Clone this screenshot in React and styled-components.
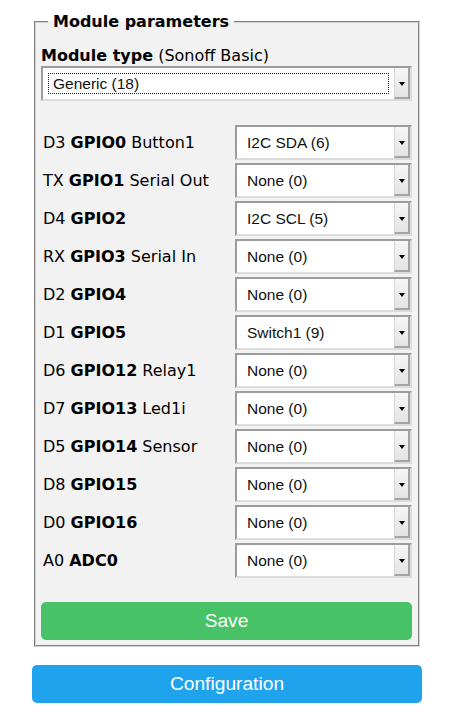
import React from "react";
import styled, { createGlobalStyle } from "styled-components";

const GlobalStyle = createGlobalStyle`
  html, body { margin: 0; padding: 0; background: #fff; }
  body { font-family: "DejaVu Sans", Verdana, sans-serif; font-size: 16px; color: #000; }
  * { box-sizing: border-box; }
`;

const Page = styled.div`
  width: 390px;
  margin-left: 32px;
  padding-top: 12px;
`;

const Fieldset = styled.fieldset`
  margin: 0 2px;
  padding: 0 6px 5px 5px;
  border: 2px groove #d4d4d4;
  background: #f2f2f2;
  min-width: 0;
`;

const Legend = styled.legend`
  margin-left: 7px;
  padding: 0 5px;
  font-weight: bold;
  line-height: 19px;
`;

const FieldLabel = styled.div`
  margin-top: 15px;
  line-height: 19px;
  white-space: nowrap;
  b { font-weight: bold; }
`;

const SelectBox = styled.div`
  display: flex;
  height: 35px;
  margin-top: ${(p) => p.$mt || 0}px;
  border: 2px solid;
  border-color: #9c9c9c #dcdcdc #dcdcdc #9c9c9c;
  background: #fff;
  font-family: "Liberation Sans", Arial, sans-serif;
  font-size: 15.5px;
  color: #111;
`;

const SelectValue = styled.div`
  flex: 1;
  display: flex;
  align-items: center;
  white-space: nowrap;
  ${(p) =>
    p.$focused
      ? `margin: 5px 5px 5px 5px; border: 1px dotted #222; padding-left: 4px;`
      : `padding-left: 10px;`}
`;

const ArrowButton = styled.div`
  width: 16px;
  display: flex;
  align-items: center;
  justify-content: center;
  background: linear-gradient(#f6f6f6, #e4e4e4);
  border-left: 1px solid #d6d6d6;
  border-right: 2px solid #a4a4a4;
  border-bottom: 2px solid #a4a4a4;
  &::after {
    content: "";
    display: block;
    width: 0;
    height: 0;
    border-left: 3px solid transparent;
    border-right: 3px solid transparent;
    border-top: 4px solid #000;
    margin-top: 2px;
  }
`;

const GpioList = styled.div`
  margin-top: 24px;
  display: flex;
  flex-direction: column;
  gap: 3px;
`;

const GpioRow = styled.div`
  display: grid;
  grid-template-columns: 1fr 177px;
  align-items: center;
  padding-left: 2px;
`;

const GpioLabel = styled.div`
  line-height: 19px;
  white-space: nowrap;
`;

const Button = styled.button`
  display: block;
  width: 100%;
  height: 38px;
  margin-top: ${(p) => p.$mt}px;
  padding: 0;
  border: 0;
  border-radius: 5px;
  background: ${(p) => p.$bg};
  color: #fff;
  font-family: "Liberation Sans", Arial, sans-serif;
  font-size: 19.2px;
  line-height: 38px;
  cursor: pointer;
`;

const Select = ({ value, focused, mt }) => (
  <SelectBox $mt={mt}>
    <SelectValue $focused={focused}>{value}</SelectValue>
    <ArrowButton />
  </SelectBox>
);

const gpios = [
  ["D3", "GPIO0", "Button1", "I2C SDA (6)"],
  ["TX", "GPIO1", "Serial Out", "None (0)"],
  ["D4", "GPIO2", "", "I2C SCL (5)"],
  ["RX", "GPIO3", "Serial In", "None (0)"],
  ["D2", "GPIO4", "", "None (0)"],
  ["D1", "GPIO5", "", "Switch1 (9)"],
  ["D6", "GPIO12", "Relay1", "None (0)"],
  ["D7", "GPIO13", "Led1i", "None (0)"],
  ["D5", "GPIO14", "Sensor", "None (0)"],
  ["D8", "GPIO15", "", "None (0)"],
  ["D0", "GPIO16", "", "None (0)"],
  ["A0", "ADC0", "", "None (0)"],
];

export default function App() {
  return (
    <>
      <GlobalStyle />
      <Page>
        <Fieldset>
          <Legend>Module parameters</Legend>
          <FieldLabel>
            <b>Module type</b> (Sonoff Basic)
          </FieldLabel>
          <Select value="Generic (18)" focused mt={1} />
          <GpioList>
            {gpios.map(([pin, gpio, fn, val]) => (
              <GpioRow key={gpio}>
                <GpioLabel>
                  {pin} <b>{gpio}</b>
                  {fn ? ` ${fn}` : ""}
                </GpioLabel>
                <Select value={val} />
              </GpioRow>
            ))}
          </GpioList>
          <Button $bg="#47c266" $mt={24}>Save</Button>
        </Fieldset>
        <Button $bg="#1fa3ec" $mt={18}>Configuration</Button>
      </Page>
    </>
  );
}
